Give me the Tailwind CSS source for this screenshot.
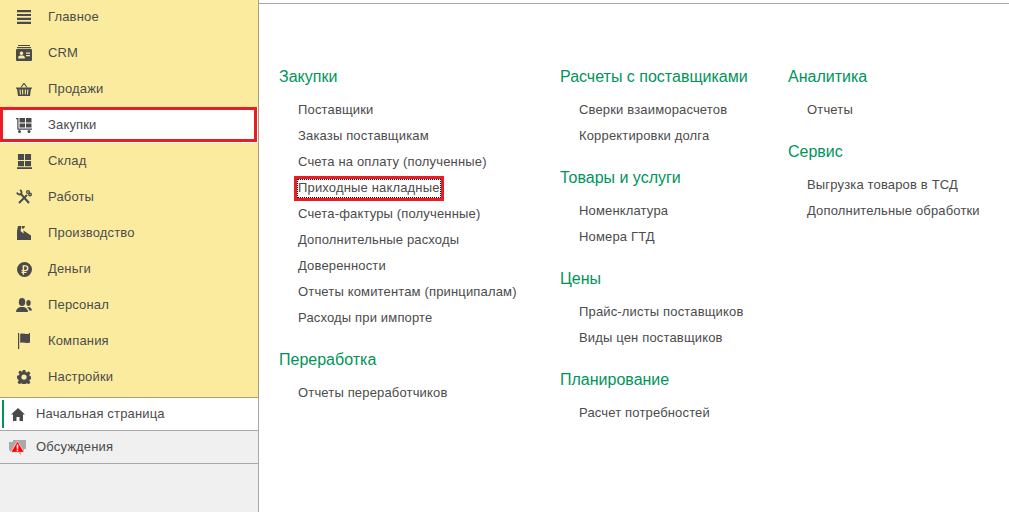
<!DOCTYPE html>
<html lang="en">

<head>
	<meta charset="UTF-8">
	<title>Закупки</title>
	<script src="https://cdn.jsdelivr.net/npm/@tailwindcss/browser@4"></script>
</head>

<body class="h-[512px] w-[1009px] overflow-hidden bg-white font-['Liberation_Sans',Arial,sans-serif] text-[13px] tracking-[0.16px] text-[#4b4b4b]">
	<div class="flex h-full">
		<!-- Sidebar -->
		<aside class="flex h-full w-[259px] shrink-0 flex-col bg-[#f0f0f0]">
			<nav class="h-[398px] shrink-0 border-r border-b border-[#a5a07a] bg-[#fbeb9f]">
				<ul class="-mt-[1px]">
					<li class="flex h-9 items-center">
						<span class="flex w-12 justify-center"><svg class="w-[14px] h-[14px]" viewBox="0 0 14 14" fill="#4a4a4a"><path d="M0 0h14v2.200H0zM0 3.900h14v2.200H0zM0 7.800h14v2.200H0zM0 11.800h14V14H0z"/></svg></span>
						<span>Главное</span>
					</li>
					<li class="flex h-9 items-center">
						<span class="flex w-12 justify-center"><svg class="w-4 h-4" viewBox="0 0 16 16" fill="#4a4a4a"><path d="M2 0h12v1H2zM1 2h14v1.200H1z"/><path fill-rule="evenodd" d="M1 4h14a1 1 0 0 1 1 1v10a1 1 0 0 1-1 1H1a1 1 0 0 1-1-1V5a1 1 0 0 1 1-1zm4.500 2.500a1.800 1.800 0 1 0 0 3.600 1.800 1.800 0 0 0 0-3.600zM2.200 13.500h6.600v-1.400c0-1-1.400-1.600-3.300-1.600s-3.300.6-3.300 1.600zM10 7.500v1.200h4V7.500zM10 10v1.200h4V10z"/></svg></span>
						<span>CRM</span>
					</li>
					<li class="flex h-9 items-center">
						<span class="flex w-12 justify-center"><svg class="w-4 h-4" viewBox="0 0 16 16" fill="#4a4a4a"><path d="M4.300 6.500 7.500 2h1l3.200 4.500h-1.200L8 3.200 5.500 6.500z"/><path fill-rule="evenodd" d="M0 6.500h16v1.300h-1L14 15H2L1 7.800H0zM3.500 8.500l.4 5h1l-.3-5zm2.500 0 .2 5h1v-5zm2.800 0v5h1l.2-5zm2.500 0-.3 5h1l.4-5z"/></svg></span>
						<span>Продажи</span>
					</li>
					<li class="relative flex h-9 items-center bg-white">
						<span class="flex w-12 justify-center"><svg class="w-4 h-4" viewBox="0 0 16 16" fill="#4a4a4a"><path d="M0 1h2.500v10.500H16v1.200H1.300V2.200H0z"/><path d="M3.500 1h5.500v4.500H3.500zM10 1h5.500v4.500H10zM3.500 6.500h5.500v4H3.500zM10 6.500h5.500v4H10z"/><circle cx="3.500" cy="14.500" r="1.500"/><circle cx="13" cy="14.500" r="1.500"/></svg></span>
						<span>Закупки</span>
						<div class="absolute left-0 top-0 h-[35px] w-[257px] border-[3px] border-[#ed1c24]"></div>
					</li>
					<li class="flex h-9 items-center">
						<span class="flex w-12 justify-center"><svg class="w-[15px] h-[15px]" viewBox="0 0 16 16" fill="#4a4a4a"><path d="M1 0h6.500v6.500H1zM8.500 0H15v6.500H8.500zM1 7.500h6.500V13H1zM8.500 7.500H15V13H8.500zM0 14h16v2H0z"/></svg></span>
						<span>Склад</span>
					</li>
					<li class="flex h-9 items-center">
						<span class="flex w-12 justify-center"><svg class="w-4 h-4" viewBox="0 0 16 16" fill="none" stroke="#4a4a4a"><path stroke-width="2" d="M4.500 4.500 13 14"/><path stroke-width="2" d="M11 6 3 14"/><path stroke-width="1.800" d="M1 3.500c.5 2 3 2.500 4 1.500s.8-3-1-4"/><circle cx="12" cy="3" r="1.400" stroke-width="1.400"/><circle cx="14" cy="5.500" r="1.300" stroke-width="1.400"/></svg></span>
						<span>Работы</span>
					</li>
					<li class="flex h-9 items-center">
						<span class="flex w-12 justify-center"><svg class="w-[14px] h-[14px]" viewBox="0 0 14 14" fill="#4a4a4a"><path d="M0 14V5L1 0h3.500L3.500 5l3 2.500V4.500l7.500 5V14z"/><path d="M5.200 0H8L7 2.500H4.800z"/></svg></span>
						<span>Производство</span>
					</li>
					<li class="flex h-9 items-center">
						<span class="flex w-12 justify-center"><svg class="w-[15px] h-[15px]" viewBox="0 0 16 16" fill="#4a4a4a"><path fill-rule="evenodd" d="M8 0a8 8 0 1 1 0 16A8 8 0 0 1 8 0zM6 3.500v5H4.800v1.300H6v.8H4.800v1.200H6V13.500h1.600v-1.700h2.600v-1.200H7.600v-.8H9c2 0 3.200-1 3.200-3.200S11 3.500 9 3.500zm1.600 1.300H9c1 0 1.600.6 1.600 1.700S10 8.500 9 8.500H7.600z"/></svg></span>
						<span>Деньги</span>
					</li>
					<li class="flex h-9 items-center">
						<span class="flex w-12 justify-center"><svg class="w-4 h-4" viewBox="0 0 16 16" fill="#4a4a4a"><ellipse cx="6" cy="5" rx="3.200" ry="4"/><path d="M0 15c0-3 2-4 4-5h4c2 1 4 2 4 5z"/><ellipse cx="12.500" cy="6" rx="2.200" ry="3"/><path d="M11 10h2c1.500.6 3 1.500 3 3.500h-3c0-1.500-1-2.500-2-3.500z"/></svg></span>
						<span>Персонал</span>
					</li>
					<li class="flex h-9 items-center">
						<span class="flex w-12 justify-center"><svg class="w-4 h-4" viewBox="0 0 16 16" fill="#4a4a4a"><path d="M2 0h1.200v16H2zM4.200 1c2.500-1 4.300 0 6.800 0 1.500 0 2.500-.3 3-.5v9c-.5.200-1.500.5-3 .5-2.500 0-4.300-1-6.800 0z"/></svg></span>
						<span>Компания</span>
					</li>
					<li class="flex h-9 items-center">
						<span class="flex w-12 justify-center"><svg class="w-[14px] h-[14px]" viewBox="0 0 16 16" fill="#4a4a4a"><path fill-rule="evenodd" d="M6.500 0h3l.4 2.200 1.500.6 1.900-1.300 2.100 2.100-1.300 1.900.6 1.500 2.200.4v3l-2.200.4-.6 1.500 1.300 1.900-2.100 2.100-1.900-1.300-1.500.6-.4 2.200h-3l-.4-2.200-1.500-.6-1.900 1.300-2.100-2.100 1.300-1.900-.6-1.500L0 9.500v-3l2.200-.4.6-1.500L1.500 2.700l2.100-2.100 1.900 1.300 1-.4zM8 5a3 3 0 1 0 0 6 3 3 0 0 0 0-6z"/></svg></span>
						<span>Настройки</span>
					</li>
				</ul>
			</nav>

			<!-- Open tabs -->
			<div class="flex h-[33px] shrink-0 items-center border-r border-b border-[#a8a8a8] bg-white pl-[2px]">
				<div class="h-[28px] w-[2px] bg-[#00945a]"></div>
				<span class="mr-1 flex w-7 justify-center"><svg class="w-[14px] h-[13px]" viewBox="0 0 14 13" fill="#4a4a4a"><path d="M7 0 0 6.500h2V13h3.500V9h3v4H12V6.500h2z"/></svg></span>
				<span>Начальная страница</span>
			</div>
			<div class="flex h-[33px] shrink-0 items-center border-r border-b border-[#a8a8a8] pl-[4px]">
				<span class="mr-1 flex w-7 justify-center"><svg class="w-[18px] h-[15px]" viewBox="0 0 18 15"><path fill="#a9a9a9" d="M0 2h4V0h13v9h-2v3h-3v3l-3-3H2L0 10z"/><path fill="#f00" stroke="#fff" stroke-width=".6" d="M8.500 1 15 12.300H2z"/><path fill="#fff" d="M7.700 4.500h1.600v4.200H7.700zM7.700 9.600h1.600v1.600H7.700z"/></svg></span>
				<span>Обсуждения</span>
			</div>
			<div class="flex-1 border-r border-[#a8a8a8]"></div>
		</aside>

		<!-- Main -->
		<main class="h-full flex-1 pt-[3px]">
			<div class="h-full border-t border-[#a8a8a8] pl-5 pt-[63px]">
				<div class="flex">
					<div class="flex w-[281px] shrink-0 flex-col gap-[19px]">
						<section>
							<h2 class="mb-[10px] h-5 text-base leading-5 tracking-normal text-[#00945a]">Закупки</h2>
							<ul class="pl-[19px]">
								<li class="h-[26px] leading-[26px]">Поставщики</li>
								<li class="h-[26px] leading-[26px]">Заказы поставщикам</li>
								<li class="h-[26px] leading-[26px]">Счета на оплату (полученные)</li>
								<li class="relative h-[26px] leading-[26px]">Приходные накладные
									<div class="absolute left-[-4px] top-[1px] h-[25px] w-[150px] border-[3px] border-[#ed1c24]">
										<div class="h-full w-full border border-dotted border-black"></div>
									</div>
								</li>
								<li class="h-[26px] leading-[26px]">Счета-фактуры (полученные)</li>
								<li class="h-[26px] leading-[26px]">Дополнительные расходы</li>
								<li class="h-[26px] leading-[26px]">Доверенности</li>
								<li class="h-[26px] leading-[26px]">Отчеты комитентам (принципалам)</li>
								<li class="h-[26px] leading-[26px]">Расходы при импорте</li>
							</ul>
						</section>
						<section>
							<h2 class="mb-[10px] h-5 text-base leading-5 tracking-normal text-[#00945a]">Переработка</h2>
							<ul class="pl-[19px]">
								<li class="h-[26px] leading-[26px]">Отчеты переработчиков</li>
							</ul>
						</section>
					</div>
					<div class="flex w-[228px] shrink-0 flex-col gap-[19px]">
						<section>
							<h2 class="mb-[10px] h-5 text-base leading-5 tracking-normal text-[#00945a]">Расчеты с поставщиками</h2>
							<ul class="pl-[19px]">
								<li class="h-[26px] leading-[26px]">Сверки взаиморасчетов</li>
								<li class="h-[26px] leading-[26px]">Корректировки долга</li>
							</ul>
						</section>
						<section>
							<h2 class="mb-[10px] h-5 text-base leading-5 tracking-normal text-[#00945a]">Товары и услуги</h2>
							<ul class="pl-[19px]">
								<li class="h-[26px] leading-[26px]">Номенклатура</li>
								<li class="h-[26px] leading-[26px]">Номера ГТД</li>
							</ul>
						</section>
						<section>
							<h2 class="mb-[10px] h-5 text-base leading-5 tracking-normal text-[#00945a]">Цены</h2>
							<ul class="pl-[19px]">
								<li class="h-[26px] leading-[26px]">Прайс-листы поставщиков</li>
								<li class="h-[26px] leading-[26px]">Виды цен поставщиков</li>
							</ul>
						</section>
						<section>
							<h2 class="mb-[10px] h-5 text-base leading-5 tracking-normal text-[#00945a]">Планирование</h2>
							<ul class="pl-[19px]">
								<li class="h-[26px] leading-[26px]">Расчет потребностей</li>
							</ul>
						</section>
					</div>
					<div class="flex flex-col gap-[19px]">
						<section>
							<h2 class="mb-[10px] h-5 text-base leading-5 tracking-normal text-[#00945a]">Аналитика</h2>
							<ul class="pl-[19px]">
								<li class="h-[26px] leading-[26px]">Отчеты</li>
							</ul>
						</section>
						<section>
							<h2 class="mb-[10px] h-5 text-base leading-5 tracking-normal text-[#00945a]">Сервис</h2>
							<ul class="pl-[19px]">
								<li class="h-[26px] leading-[26px]">Выгрузка товаров в ТСД</li>
								<li class="h-[26px] leading-[26px]">Дополнительные обработки</li>
							</ul>
						</section>
					</div>
				</div>
			</div>
		</main>
	</div>
</body>

</html>
